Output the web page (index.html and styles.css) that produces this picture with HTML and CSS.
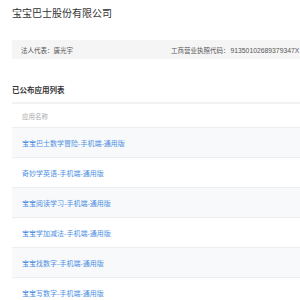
FILE: index.html
```html
<!DOCTYPE html>
<html lang="zh-CN">
<head>
  <meta charset="UTF-8">
  <title>宝宝巴士股份有限公司</title>
  <link rel="stylesheet" href="styles.css">
</head>
<body>
  <div class="page">
    <h1 class="company">宝宝巴士股份有限公司</h1>

    <div class="info-bar">
      <span class="info-item info-owner">法人代表：唐光宇</span>
      <span class="info-item">工商营业执照代码：<span class="code">91350102689379347X</span></span>
    </div>

    <h2 class="section-title">已公布应用列表</h2>

    <table class="app-table">
      <thead>
        <tr><th>应用名称</th></tr>
      </thead>
      <tbody>
        <tr><td><a href="#">宝宝巴士数学冒险-手机端-通用版</a></td></tr>
        <tr><td><a href="#">奇妙学英语-手机端-通用版</a></td></tr>
        <tr><td><a href="#">宝宝阅读学习-手机端-通用版</a></td></tr>
        <tr><td><a href="#">宝宝学加减法-手机端-通用版</a></td></tr>
        <tr><td><a href="#">宝宝找数字-手机端-通用版</a></td></tr>
        <tr><td><a href="#">宝宝写数字-手机端-通用版</a></td></tr>
      </tbody>
    </table>
  </div>
</body>
</html>
```

FILE: styles.css
```css
body {
  margin: 0;
  font-family: "Noto Sans CJK SC", "Noto Sans", sans-serif;
  color: #333;
  background: #fff;
  overflow: hidden;
}
.page {
  width: 420px;
  padding: 6px 12px 0;
}
.company {
  margin: 0;
  font-size: 10px;
  line-height: 14px;
  font-weight: normal;
  color: #333;
}
.info-bar {
  display: flex;
  align-items: center;
  height: 19px;
  margin-top: 20px;
  padding-left: 9px;
  background: #f5f5f5;
  font-size: 6.5px;
  color: #555;
  white-space: nowrap;
}
.info-owner {
  width: 150px;
}
.code {
  font-family: "Liberation Sans", sans-serif;
  font-size: 6.8px;
  margin-left: 1px;
}
.section-title {
  margin: 25px 0 0;
  font-size: 7.5px;
  line-height: 11px;
  font-weight: bold;
  color: #333;
}
.app-table {
  width: 100%;
  margin-top: 7px;
  border-collapse: collapse;
  font-size: 7px;
}
.app-table th {
  height: 23px;
  padding: 0 10px;
  border-top: 2px solid #f2f2f2;
  border-bottom: 1px solid #eee;
  text-align: left;
  font-weight: normal;
  font-size: 6.5px;
  color: #aaa;
}
.app-table td {
  height: 29px;
  padding: 0 10px;
  border-bottom: 1px solid #eee;
}
.app-table tbody tr:nth-child(odd) {
  background: #f8f9fa;
}
.app-table a {
  color: #4d8fe3;
  text-decoration: none;
}
```
